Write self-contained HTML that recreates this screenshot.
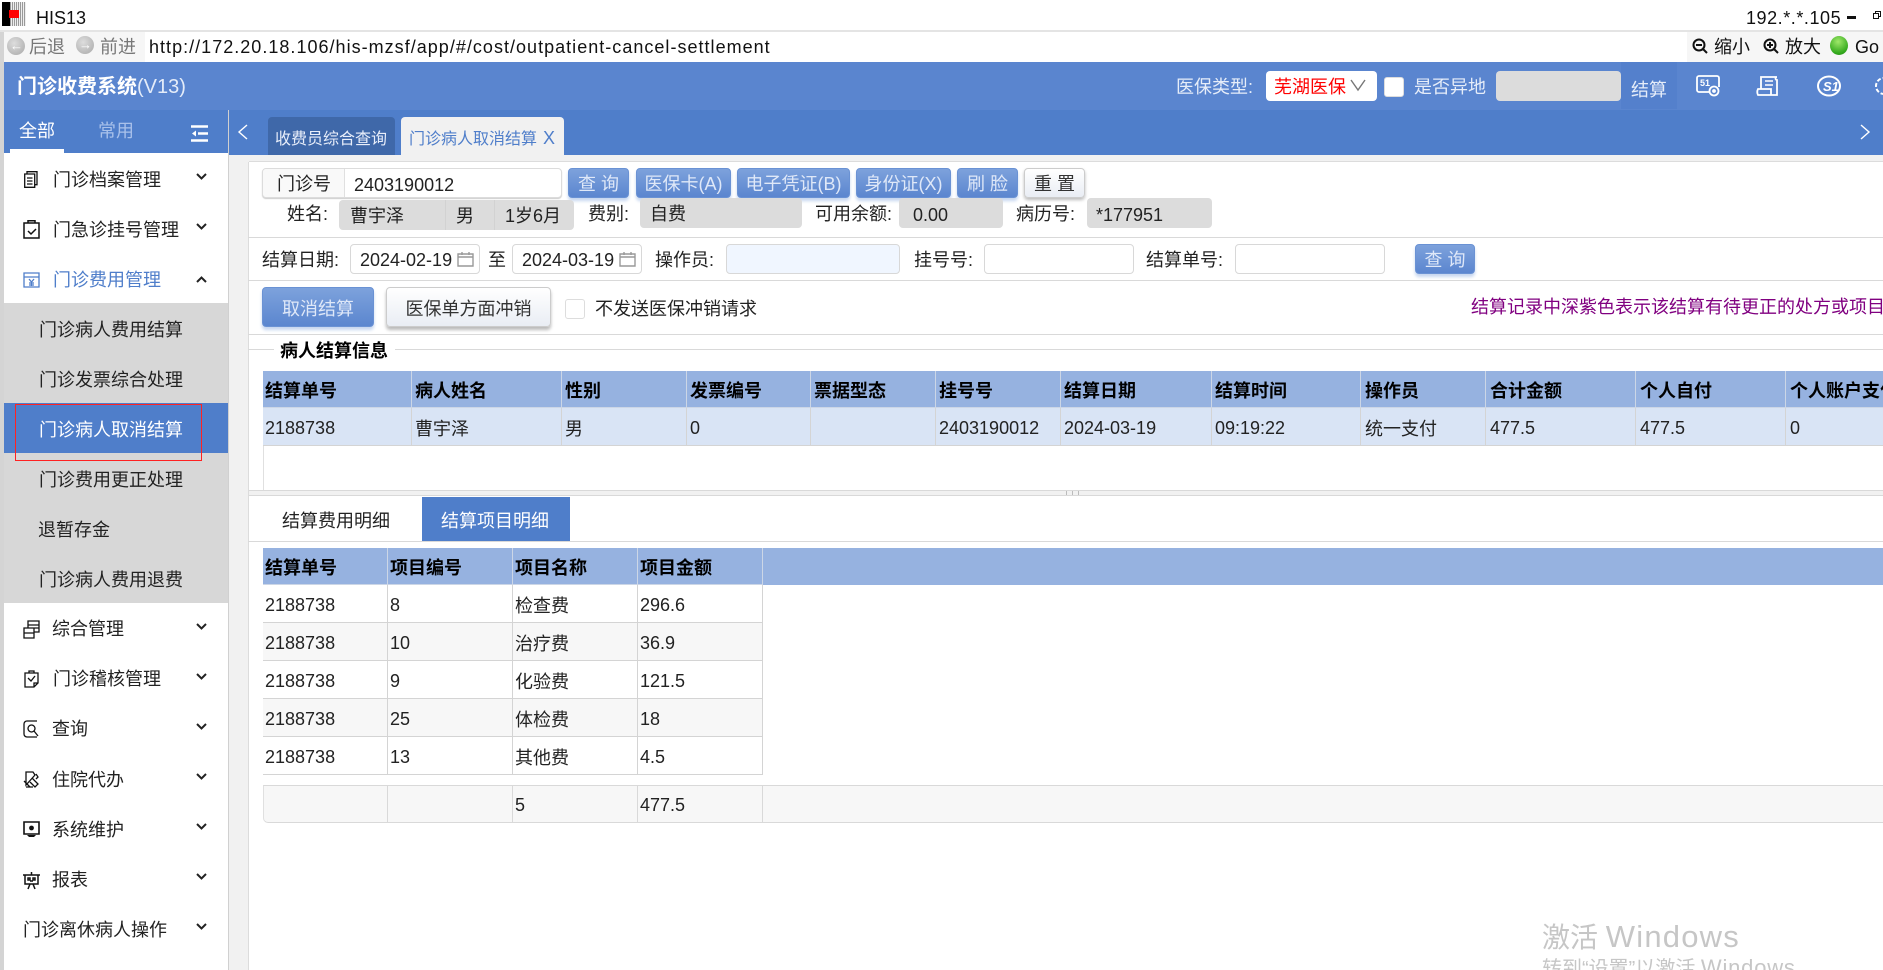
<!DOCTYPE html>
<html lang="zh"><head><meta charset="utf-8"><title>HIS13</title>
<style>
html,body{margin:0;padding:0;width:1883px;height:970px;overflow:hidden;background:#fff}
body{position:relative;font-family:"Liberation Sans","Noto Sans CJK SC",sans-serif;font-size:18px;color:#222}
.a{position:absolute;box-sizing:border-box}
.t{position:absolute;white-space:nowrap;line-height:30px;height:30px;margin-top:1px}
.w{color:#fff}
.btn{position:absolute;box-sizing:border-box;height:30px;line-height:31px;text-align:center;border-radius:4px;color:#dfe8f8;background:linear-gradient(#7da2dc,#5b86cf);border:1px solid #6a92d4;box-shadow:0 3px 3px #c6d6f0;white-space:nowrap}
.inp{position:absolute;box-sizing:border-box;height:30px;background:#fff;border:1px solid #d8d8d8;border-radius:4px;line-height:28px}
.gr{position:absolute;background:#dcdcdc;border-radius:4px;box-sizing:border-box}
.line{position:absolute;left:248px;right:0;height:1px;background:#d9d9d9}
table{position:absolute;border-collapse:separate;border-spacing:0;table-layout:fixed}
td,th{box-sizing:border-box;padding:0 0 0 2px;text-align:left;border-right:1px solid #d4d4d4;border-bottom:1px solid #d4d4d4;white-space:nowrap;overflow:hidden;font-size:18px}
th{background:#96b2e0;color:#000;height:37px;font-weight:700;padding-top:2px;border-right-color:#ccd6e6;border-bottom-color:#ccd6e6}
td{height:38px;color:#222;padding-top:3px}
.t1 th:not(:first-child),.t1 td:not(:first-child){padding-left:3px}
.t1 th:nth-child(n+9),.t1 td:nth-child(n+9){padding-left:4px}
svg{position:absolute;overflow:visible}
.ic{fill:none;stroke:#111;stroke-width:1.3}
</style></head><body>

<!-- title bar -->
<div class="a" style="left:2px;top:2px;width:24px;height:24px;background:repeating-linear-gradient(90deg,#999 0 1px,#eee 1px 2px)"></div>
<div class="a" style="left:2px;top:2px;width:8px;height:24px;background:#000"></div>
<div class="a" style="left:9px;top:10px;width:10px;height:8px;background:#f00"></div>
<div class="t" style="left:36px;top:3px;color:#111;margin-top:0">HIS13</div>
<div class="t" style="left:1746px;top:3px;color:#111;margin-top:0;letter-spacing:.55px">192.*.*.105</div>
<div class="a" style="left:1847px;top:16px;width:9px;height:3px;background:#111"></div>
<div class="a" style="left:1875px;top:11px;width:6px;height:6px;border:1px solid #111;background:#fff"></div>
<div class="a" style="left:1873px;top:13px;width:6px;height:6px;border:1px solid #111;background:#fff"></div>
<div class="a" style="left:0;top:30px;width:1883px;height:2px;background:#e4e4e4"></div>

<!-- browser toolbar -->
<div class="a" style="left:0;top:32px;width:4px;height:938px;background:#d4d4d4"></div>
<div class="a" style="left:4px;top:32px;width:141px;height:30px;background:#f6f6f6"></div>
<div class="a" style="left:1687px;top:32px;width:196px;height:30px;background:#f6f6f6"></div>
<div class="a" style="left:7px;top:37px;width:18px;height:18px;border-radius:50%;background:radial-gradient(circle at 40% 35%,#ddd,#a8a8a8)"></div>
<div class="t" style="left:10px;top:31px;color:#fff;font-size:13px;margin-top:0">←</div>
<div class="t" style="left:29px;top:32px;color:#777;margin-top:0">后退</div>
<div class="a" style="left:76px;top:36px;width:18px;height:18px;border-radius:50%;background:radial-gradient(circle at 40% 35%,#ddd,#a8a8a8)"></div>
<div class="t" style="left:79px;top:30px;color:#fff;font-size:13px;margin-top:0">→</div>
<div class="t" style="left:100px;top:32px;color:#777;margin-top:0">前进</div>
<div class="t" style="left:149px;top:32px;color:#111;margin-top:0;letter-spacing:1.02px">http://172.20.18.106/his-mzsf/app/#/cost/outpatient-cancel-settlement</div>
<svg style="left:1692px;top:37px" width="16" height="18"><circle cx="7" cy="8" r="5.5" fill="none" stroke="#111" stroke-width="2"/><path d="M4 8h6M11 12l4 4" stroke="#111" stroke-width="2" fill="none"/></svg>
<div class="t" style="left:1714px;top:32px;color:#111;margin-top:0">缩小</div>
<svg style="left:1763px;top:37px" width="16" height="18"><circle cx="7" cy="8" r="5.5" fill="none" stroke="#111" stroke-width="2"/><path d="M4 8h6M7 5v6M11 12l4 4" stroke="#111" stroke-width="2" fill="none"/></svg>
<div class="t" style="left:1785px;top:32px;color:#111;margin-top:0">放大</div>
<div class="a" style="left:1830px;top:36px;width:18px;height:19px;border-radius:50%;background:radial-gradient(circle at 45% 30%,#9fe86a,#32a81c 70%,#227a14)"></div>
<div class="t" style="left:1855px;top:32px;color:#111;margin-top:0">Go</div>

<!-- header -->
<div class="a" style="left:4px;top:62px;right:0;height:48px;background:#5a85cf"></div>
<div class="t w" style="left:17px;top:71px;font-size:20px;font-weight:700">门诊收费系统<span style="font-weight:400;font-size:20px;color:#e4ecf9">(V13)</span></div>
<div class="t" style="left:1176px;top:71px;color:#e6edf9">医保类型:</div>
<div class="a" style="left:1266px;top:71px;width:111px;height:30px;background:#fff;border-radius:4px"></div>
<div class="t" style="left:1274px;top:71px;color:#f00">芜湖医保</div>
<svg style="left:1349px;top:78px" width="20" height="14"><path d="M2 2l7 10 7-10" fill="none" stroke="#777" stroke-width="1.4"/></svg>
<div class="a" style="left:1384px;top:77px;width:20px;height:20px;background:#fff;border-radius:3px;border:1px solid #ddd"></div>
<div class="t" style="left:1414px;top:71px;color:#e6edf9">是否异地</div>
<div class="a" style="left:1496px;top:71px;width:125px;height:30px;background:#dcdcdc;border-radius:4px"></div>
<div class="a" style="left:1621px;top:62px;width:56px;height:47px;background:#5480cc"></div>
<div class="t" style="left:1631px;top:74px;color:#e6edf9">结算</div>
<!-- header icons -->
<svg style="left:1696px;top:75px" width="28" height="22" fill="none" stroke="#fff" stroke-width="1.8"><path d="M14 17H3a2 2 0 0 1-2-2V3a2 2 0 0 1 2-2h18a2 2 0 0 1 2 2v9"/><circle cx="18" cy="16" r="4.5"/><circle cx="18" cy="16" r="1"/><text x="4" y="11" font-size="9" fill="#fff" stroke="none" font-weight="700">51</text></svg>
<svg style="left:1756px;top:75px" width="24" height="22" fill="none" stroke="#fff" stroke-width="1.8"><path d="M5 14V2h16c-2 0-2 3 0 3v15H2c-1-2-1-4 0-6h13v6"/><path d="M9 6h8M9 10h8" stroke-width="1.6"/></svg>
<svg style="left:1817px;top:75px" width="24" height="22" fill="none" stroke="#fff" stroke-width="2"><ellipse cx="12" cy="11" rx="11" ry="9.5"/><text x="6" y="16" font-size="13" font-weight="700" font-style="italic" fill="#fff" stroke="none">S1</text></svg>
<svg style="left:1874px;top:76px" width="14" height="20" fill="none" stroke="#fff" stroke-width="2"><circle cx="10" cy="10" r="8" stroke-dasharray="4 2"/></svg>

<!-- sidebar top -->
<div class="a" style="left:4px;top:110px;width:224px;height:43px;background:#4f7eca"></div>
<div class="a" style="left:10px;top:149px;width:54px;height:4px;background:#fff"></div>
<div class="t w" style="left:19px;top:115px">全部</div>
<div class="t" style="left:98px;top:115px;color:#a9c1ea">常用</div>
<svg style="left:191px;top:125px" width="18" height="17"><path d="M0 1.500h17M7 8.500h10M0 15.500h17" stroke="#fff" stroke-width="2.400" fill="none"/><path d="M5 5.500l-4 3 4 3z" fill="#fff"/></svg>

<!-- sidebar body -->
<div class="a" style="left:4px;top:153px;width:224px;height:817px;background:#fff"></div>
<div class="a" style="left:228px;top:110px;width:1px;height:860px;background:#d0d0d0"></div>
<div class="a" style="left:229px;top:155px;width:19px;height:815px;background:#f1f1f1"></div>
<div class="a" style="left:248px;top:162px;width:1px;height:808px;background:#dcdcdc"></div>
<div class="a" style="left:229px;top:155px;right:0;height:7px;background:#f1f1f1"></div>
<div class="a" style="left:249px;top:161px;right:0;height:1px;background:#dcdcdc"></div>

<svg class="ic" style="left:24px;top:171px" width="14" height="17"><path d="M3 3V.7h10v13h-2M.7 3h10v13.300H.7zM3 7h5.500M3 10h5.500M3 13h5.500"/></svg>
<div class="t" style="left:53px;top:164px">门诊档案管理</div>
<svg class="ic" style="left:23px;top:220px" width="17" height="19"><path d="M1 3h15v15H1zM5 3V.8h7V3M5 11l3 3 5-5" stroke-width="1.500"/></svg>
<div class="t" style="left:53px;top:214px">门急诊挂号管理</div>
<svg style="left:23px;top:272px" width="17" height="16" fill="none" stroke="#4f7eca" stroke-width="1.300"><path d="M1 1h15v14H1zM1 5h15M6 7l2.500 3L11 7M8.500 10v4M6 11h5M6 13h5"/></svg>
<div class="t" style="left:53px;top:264px;color:#4f7eca">门诊费用管理</div>

<div class="a" style="left:4px;top:303px;width:224px;height:300px;background:#d7d7d7"></div>
<div class="a" style="left:4px;top:403px;width:224px;height:50px;background:#4f7eca"></div>
<div class="t" style="left:39px;top:314px">门诊病人费用结算</div>
<div class="t" style="left:39px;top:364px">门诊发票综合处理</div>
<div class="t w" style="left:39px;top:414px">门诊病人取消结算</div>
<div class="t" style="left:39px;top:464px">门诊费用更正处理</div>
<div class="t" style="left:38px;top:514px">退暂存金</div>
<div class="t" style="left:39px;top:564px">门诊病人费用退费</div>
<div class="a" style="left:15px;top:404px;width:187px;height:57px;border:1px solid #f22"></div>

<svg class="ic" style="left:23px;top:620px" width="17" height="19"><path d="M5 8V1h11v11h-5M5 5h11M8 8h8M1 8h10v10H1zM1 13h10"/></svg>
<div class="t" style="left:52px;top:613px">综合管理</div>
<svg class="ic" style="left:24px;top:670px" width="15" height="18"><path d="M1 3h13v10l-4 4H1zM5 3V1h5v2M4 8l3 3 4-5M10 17v-4h4"/></svg>
<div class="t" style="left:53px;top:663px">门诊稽核管理</div>
<svg class="ic" style="left:23px;top:720px" width="17" height="18"><path d="M14 17H4a3 3 0 0 1-3-3V4a3 3 0 0 1 3-3h10M8.500 12a3.500 3.500 0 1 0 0-7 3.500 3.500 0 0 0 0 7zM11 11l4 5"/></svg>
<div class="t" style="left:52px;top:713px">查询</div>
<svg class="ic" style="left:23px;top:771px" width="17" height="17"><path d="M3 1h7l2 3-9 10zM3 16h7M1 10l6 6M9 7l6 6-3 3-5-5M13 3l2 3-2 2"/></svg>
<div class="t" style="left:52px;top:764px">住院代办</div>
<svg style="left:23px;top:821px" width="17" height="17"><path d="M1 1h15v12H1z" fill="none" stroke="#111" stroke-width="1.600"/><circle cx="8.500" cy="7" r="2.400" fill="#111"/><path d="M4 14h9l-2 2H6z" fill="#111"/></svg>
<div class="t" style="left:52px;top:814px">系统维护</div>
<svg class="ic" style="left:23px;top:871px" width="17" height="18"><path d="M0 4h17M2 4v9h13V4M8.500 1v3M5 18l2-5M12 18l-2-5M5 7h2v2H5zM10 7h2v2h-2zM7 10h3" stroke-width="1.500"/></svg>
<div class="t" style="left:52px;top:864px">报表</div>
<div class="t" style="left:23px;top:914px">门诊离休病人操作</div>

<svg style="left:196px;top:173px" width="11" height="8"><path d="M1 1l4.500 4.500L10 1" fill="none" stroke="#222" stroke-width="2"/></svg>
<svg style="left:196px;top:223px" width="11" height="8"><path d="M1 1l4.500 4.500L10 1" fill="none" stroke="#222" stroke-width="2"/></svg>
<svg style="left:196px;top:276px" width="11" height="8"><path d="M1 6L5.500 1.500 10 6" fill="none" stroke="#222" stroke-width="2"/></svg>
<svg style="left:196px;top:623px" width="11" height="8"><path d="M1 1l4.500 4.500L10 1" fill="none" stroke="#222" stroke-width="2"/></svg>
<svg style="left:196px;top:673px" width="11" height="8"><path d="M1 1l4.500 4.500L10 1" fill="none" stroke="#222" stroke-width="2"/></svg>
<svg style="left:196px;top:723px" width="11" height="8"><path d="M1 1l4.500 4.500L10 1" fill="none" stroke="#222" stroke-width="2"/></svg>
<svg style="left:196px;top:773px" width="11" height="8"><path d="M1 1l4.500 4.500L10 1" fill="none" stroke="#222" stroke-width="2"/></svg>
<svg style="left:196px;top:823px" width="11" height="8"><path d="M1 1l4.500 4.500L10 1" fill="none" stroke="#222" stroke-width="2"/></svg>
<svg style="left:196px;top:873px" width="11" height="8"><path d="M1 1l4.500 4.500L10 1" fill="none" stroke="#222" stroke-width="2"/></svg>
<svg style="left:196px;top:923px" width="11" height="8"><path d="M1 1l4.500 4.500L10 1" fill="none" stroke="#222" stroke-width="2"/></svg>

<!-- tabs bar -->
<div class="a" style="left:229px;top:110px;right:0;height:45px;background:#4f7eca"></div>
<svg style="left:237px;top:124px" width="12" height="16"><path d="M10 1L2 8l8 7" fill="none" stroke="#fff" stroke-width="1.400"/></svg>
<svg style="left:1859px;top:124px" width="12" height="16"><path d="M2 1l8 7-8 7" fill="none" stroke="#fff" stroke-width="1.400"/></svg>
<div class="a" style="left:268px;top:117px;width:127px;height:38px;background:#3f68a9;border-radius:4px 4px 0 0"></div>
<div class="t" style="left:275px;top:124px;font-size:16px;color:#e8eefa">收费员综合查询</div>
<div class="a" style="left:401px;top:117px;width:163px;height:38px;background:#f1f1f1;border-radius:4px 4px 0 0"></div>
<div class="t" style="left:409px;top:124px;font-size:16px;color:#4f7eca">门诊病人取消结算</div>
<div class="t" style="left:543px;top:122px;color:#4f7eca;font-size:18px">X</div>

<!-- row 1 -->
<div class="a" style="left:262px;top:168px;width:300px;height:30px;background:#fff;border:1px solid #dcdcdc;border-radius:4px;box-shadow:0 1px 1px #ccc"></div>
<div class="a" style="left:263px;top:169px;width:82px;height:28px;background:#f9f9f9;border-right:1px solid #e0e0e0;border-radius:4px 0 0 4px"></div>
<div class="t" style="left:277px;top:168px">门诊号</div>
<div class="t" style="left:354px;top:169px">2403190012</div>
<div class="btn" style="left:568px;top:168px;width:61px">查 询</div>
<div class="btn" style="left:636px;top:168px;width:95px">医保卡(A)</div>
<div class="btn" style="left:737px;top:168px;width:113px">电子凭证(B)</div>
<div class="btn" style="left:856px;top:168px;width:95px">身份证(X)</div>
<div class="btn" style="left:957px;top:168px;width:61px">刷 脸</div>
<div class="btn" style="left:1024px;top:168px;width:61px;background:linear-gradient(#fff,#e9edf4);color:#333;border-color:#ccc;box-shadow:0 2px 3px #bbb">重 置</div>

<!-- row 2 -->
<div class="t" style="left:287px;top:198px">姓名:</div>
<div class="gr" style="left:339px;top:200px;width:235px;height:30px"></div>
<div class="a" style="left:445px;top:200px;width:1px;height:30px;background:#d2d2d2"></div>
<div class="a" style="left:494px;top:200px;width:1px;height:30px;background:#d2d2d2"></div>
<div class="t" style="left:350px;top:200px">曹宇泽</div>
<div class="t" style="left:456px;top:200px">男</div>
<div class="t" style="left:505px;top:200px">1岁6月</div>
<div class="t" style="left:588px;top:198px">费别:</div>
<div class="gr" style="left:640px;top:198px;width:162px;height:30px"></div>
<div class="t" style="left:650px;top:198px">自费</div>
<div class="t" style="left:815px;top:198px">可用余额:</div>
<div class="gr" style="left:899px;top:198px;width:104px;height:30px"></div>
<div class="t" style="left:913px;top:199px">0.00</div>
<div class="t" style="left:1016px;top:198px">病历号:</div>
<div class="gr" style="left:1087px;top:198px;width:125px;height:30px"></div>
<div class="t" style="left:1096px;top:199px">*177951</div>
<div class="line" style="top:237px"></div>

<!-- row 3 -->
<div class="t" style="left:262px;top:244px">结算日期:</div>
<div class="inp" style="left:350px;top:244px;width:130px"></div>
<div class="t" style="left:360px;top:244px">2024-02-19</div>
<svg style="left:457px;top:251px" width="17" height="16" fill="none" stroke="#999" stroke-width="1.400"><path d="M1 3h15v12H1zM1 6h15M5 1v3M12 1v3"/></svg>
<div class="t" style="left:488px;top:244px">至</div>
<div class="inp" style="left:512px;top:244px;width:130px"></div>
<div class="t" style="left:522px;top:244px">2024-03-19</div>
<svg style="left:619px;top:251px" width="17" height="16" fill="none" stroke="#999" stroke-width="1.400"><path d="M1 3h15v12H1zM1 6h15M5 1v3M12 1v3"/></svg>
<div class="t" style="left:655px;top:244px">操作员:</div>
<div class="inp" style="left:726px;top:244px;width:174px;background:#f0f6ff"></div>
<div class="t" style="left:914px;top:244px">挂号号:</div>
<div class="inp" style="left:984px;top:244px;width:150px"></div>
<div class="t" style="left:1146px;top:244px">结算单号:</div>
<div class="inp" style="left:1235px;top:244px;width:150px"></div>
<div class="btn" style="left:1415px;top:244px;width:60px">查 询</div>
<div class="line" style="top:280px"></div>

<!-- row 4 -->
<div class="btn" style="left:262px;top:287px;width:112px;height:40px;line-height:42px">取消结算</div>
<div class="btn" style="left:386px;top:287px;width:165px;height:40px;line-height:42px;background:linear-gradient(#fff,#e9edf4);color:#333;border-color:#ccc;box-shadow:0 3px 3px #bbb">医保单方面冲销</div>
<div class="a" style="left:565px;top:299px;width:20px;height:20px;border:1px solid #ddd;border-radius:3px;background:#fff"></div>
<div class="t" style="left:595px;top:293px">不发送医保冲销请求</div>
<div class="t" style="left:1471px;top:291px;color:#800080">结算记录中深紫色表示该结算有待更正的处方或项目</div>
<div class="line" style="top:334px"></div>

<div class="line" style="top:349px"></div>
<div class="a" style="left:274px;top:340px;width:121px;height:22px;background:#fff"></div>
<div class="t" style="left:280px;top:335px;font-weight:700;color:#000">病人结算信息</div>

<!-- table 1 -->
<table class="t1" style="left:263px;top:371px;width:1623px">
<colgroup><col style="width:149px"><col style="width:150px"><col style="width:125px"><col style="width:124px"><col style="width:125px"><col style="width:125px"><col style="width:151px"><col style="width:149px"><col style="width:125px"><col style="width:150px"><col style="width:150px"><col style="width:150px"></colgroup>
<tr><th>结算单号</th><th>病人姓名</th><th>性别</th><th>发票编号</th><th>票据型态</th><th>挂号号</th><th>结算日期</th><th>结算时间</th><th>操作员</th><th>合计金额</th><th>个人自付</th><th>个人账户支付</th></tr>
<tr style="background:#d9e4f5"><td>2188738</td><td>曹宇泽</td><td>男</td><td>0</td><td></td><td>2403190012</td><td>2024-03-19</td><td>09:19:22</td><td>统一支付</td><td>477.5</td><td>477.5</td><td>0</td></tr>
</table>
<div class="a" style="left:263px;top:446px;width:1px;height:44px;background:#e0e0e0"></div>

<!-- splitter -->
<div class="a" style="left:249px;top:490px;right:0;height:6px;background:#f1f1f1;border-top:1px solid #d9d9d9;border-bottom:1px solid #d9d9d9"></div>
<div class="a" style="left:1066px;top:491px;width:18px;height:4px;background:repeating-linear-gradient(90deg,#bbb 0 1px,#f1f1f1 1px 6px)"></div>

<!-- tabs -->
<div class="t" style="left:282px;top:505px">结算费用明细</div>
<div class="a" style="left:422px;top:497px;width:148px;height:44px;background:#4f7eca"></div>
<div class="t w" style="left:441px;top:505px">结算项目明细</div>
<div class="line" style="top:541px"></div>

<!-- table 2 -->
<div class="a" style="left:263px;top:548px;right:0;height:37px;background:#96b2e0"></div>
<table style="left:263px;top:548px;width:500px">
<colgroup><col style="width:125px"><col style="width:125px"><col style="width:125px"><col style="width:125px"></colgroup>
<tr><th>结算单号</th><th>项目编号</th><th>项目名称</th><th>项目金额</th></tr>
<tr><td>2188738</td><td>8</td><td>检查费</td><td>296.6</td></tr>
<tr style="background:#f7f7f7"><td>2188738</td><td>10</td><td>治疗费</td><td>36.9</td></tr>
<tr><td>2188738</td><td>9</td><td>化验费</td><td>121.5</td></tr>
<tr style="background:#f7f7f7"><td>2188738</td><td>25</td><td>体检费</td><td>18</td></tr>
<tr><td>2188738</td><td>13</td><td>其他费</td><td>4.5</td></tr>
</table>
<div class="a" style="left:263px;top:785px;right:0;height:38px;background:#f7f7f7;border-top:1px solid #d9d9d9;border-bottom:1px solid #d9d9d9;border-left:1px solid #e0e0e0;border-radius:0 0 0 5px"></div>
<div class="a" style="left:387px;top:785px;width:1px;height:38px;background:#d9d9d9"></div>
<div class="a" style="left:512px;top:785px;width:1px;height:38px;background:#d9d9d9"></div>
<div class="a" style="left:637px;top:785px;width:1px;height:38px;background:#d9d9d9"></div>
<div class="a" style="left:762px;top:785px;width:1px;height:38px;background:#d9d9d9"></div>
<div class="t" style="left:515px;top:789px">5</div>
<div class="t" style="left:640px;top:789px">477.5</div>

<!-- watermark -->
<div class="t" style="left:1542px;top:921px;font-size:28px;color:#c6c6c6;line-height:32px;height:32px;margin-top:0">激活 <span style="font-size:31px;letter-spacing:1.2px">Windows</span></div>
<div class="t" style="left:1542px;top:955px;font-size:20px;color:#c6c6c6;line-height:26px;height:26px;margin-top:0">转到“设置”以激活 <span style="font-size:22px;letter-spacing:.8px">Windows</span></div>
</body></html>
